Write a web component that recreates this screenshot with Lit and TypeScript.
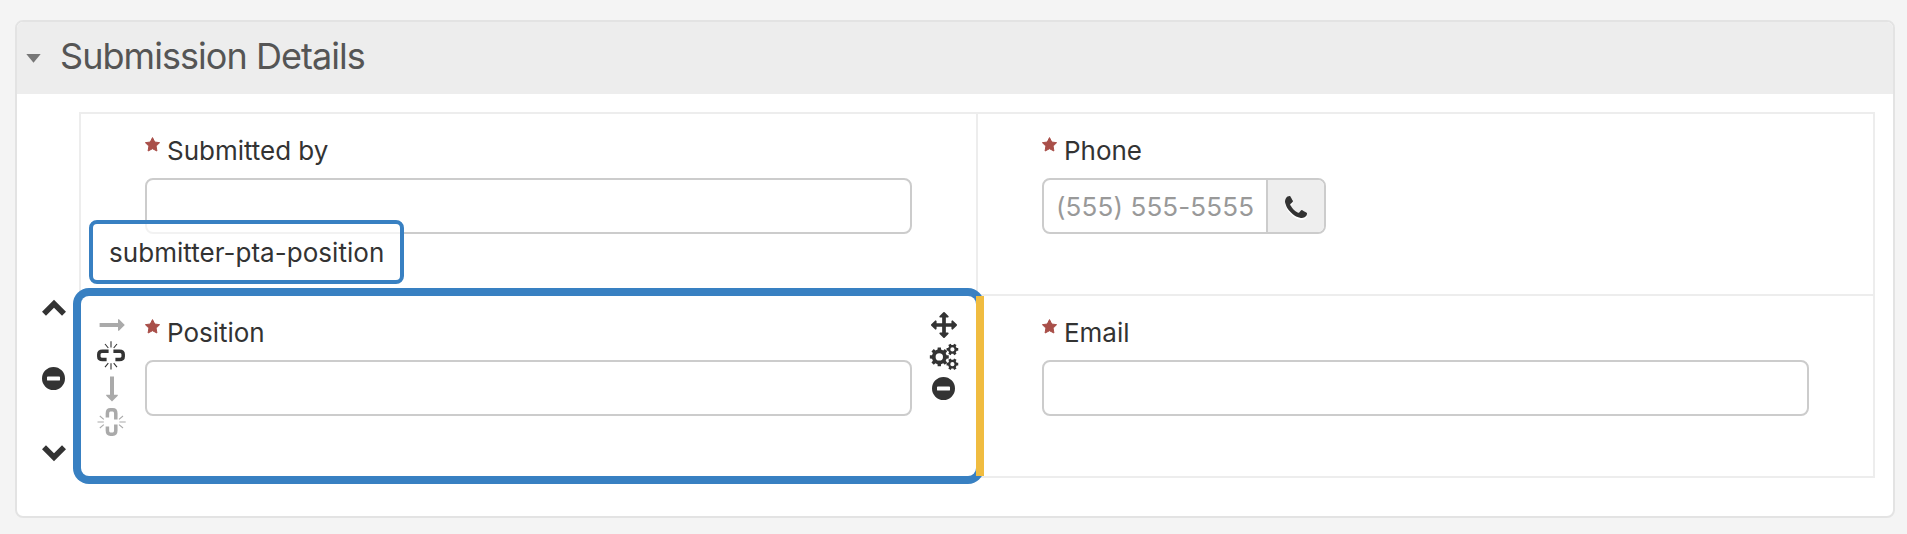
import { LitElement, html, svg, css } from "lit";
import { customElement, property } from "lit/decorators.js";
import { classMap } from "lit/directives/class-map.js";

/** Outline of a cog wheel with a round hole, for fill-rule evenodd. */
function gear(cx: number, cy: number, outer: number, inner: number, hole: number, teeth: number, turn = 0): string {
  const step = (Math.PI * 2) / teeth;
  const points: string[] = [];
  for (let i = 0; i < teeth; i++) {
    const a = i * step + turn;
    for (const [r, o] of [[inner, -0.3], [outer, -0.22], [outer, 0.22], [inner, 0.3]]) {
      const t = a + o * step;
      points.push(`${(cx + r * Math.cos(t)).toFixed(2)} ${(cy + r * Math.sin(t)).toFixed(2)}`);
    }
  }
  return `M${points.join("L")}ZM${cx - hole} ${cy}a${hole} ${hole} 0 1 0 ${hole * 2} 0a${hole} ${hole} 0 1 0 ${-hole * 2} 0Z`;
}

const chain = svg`
  <path d="M11.600 10.200H5.500Q1.800 10.200 1.800 13.200V15.600Q1.800 18.600 5.500 18.600H9.600M16.400 10.200H22.500Q26.200 10.200 26.200 13.200V15.600Q26.200 18.600 22.500 18.600H18.400"
    fill="none" stroke="currentColor" stroke-width="3.5"/>
  <path d="M14 .3V6.600M14 22.200V28.500M8 3L11.300 7M20 3L16.700 7M8 26.200L11.300 22.200M20 26.200L16.700 22.200"
    fill="none" stroke="currentColor" stroke-width="1.1"/>`;

const ICONS: Record<string, [number, number, unknown]> = {
  up: [24, 16, svg`<path d="M2 13.700L12 3.700L22 13.700" fill="none" stroke="currentColor" stroke-width="5.600"/>`],
  down: [24, 16, svg`<path d="M2 2.300L12 12.300L22 2.300" fill="none" stroke="currentColor" stroke-width="5.600"/>`],
  minus: [23, 23, svg`<path fill-rule="evenodd" d="M11.500 0a11.500 11.500 0 1 0 0 23a11.500 11.500 0 1 0 0-23ZM5.900 9.400H17.100Q18 9.400 18 10.300V12.700Q18 13.600 17.100 13.600H5.900Q5 13.600 5 12.700V10.300Q5 9.400 5.900 9.400Z"/>`],
  right: [26, 12, svg`<path d="M.6 4H19V.2H20L25.800 6L20 11.800H19V8H.6Z"/>`],
  bottom: [12, 26, svg`<path d="M4 .4H8V18.800H11.800V19.800L6 25.600L.2 19.800V18.800H4Z"/>`],
  unlinkH: [28, 29, chain],
  unlinkV: [29, 28, svg`<g transform="translate(29 0) rotate(90)">${chain}</g>`],
  move: [26, 26, svg`<path transform="scale(.01451)" d="M1792 896q0 26-19 45l-256 256q-19 19-45 19t-45-19-19-45v-128h-384v384h128q26 0 45 19t19 45-19 45l-256 256q-19 19-45 19t-45-19l-256-256q-19-19-19-45t19-45 45-19h128v-384h-384v128q0 26-19 45t-45 19-45-19l-256-256q-19-19-19-45t19-45l256-256q19-19 45-19t45 19 19 45v128h384v-384h-128q-26 0-45-19t-19-45 19-45l256-256q19-19 45-19t45 19l256 256q19 19 19 45t-19 45-45 19h-128v384h384v-128q0-26 19-45t45-19 45 19l256 256q19 19 19 45z"/>`],
  cogs: [28, 26, svg`<path fill-rule="evenodd" d="${gear(9.300, 12.900, 9.600, 7.500, 3.700, 8)}${gear(22.400, 5.400, 6, 4.500, 2.100, 6)}${gear(22.400, 20.200, 6, 4.500, 2.100, 6)}"/>`],
  phone: [22, 22, svg`<path transform="scale(.015625) translate(-192 -128)" d="M1600 1240q0 27-10 70.5t-21 68.5q-21 50-122 106-94 51-186 51-27 0-52.5-3.5t-57.5-12.5-47.5-14.5-55.5-20.5-49-18q-98-35-175-83-128-79-264.5-215.5t-215.5-264.5q-48-77-83-175-3-9-18-49t-20.5-55.5-14.5-47.5-12.5-57.5-3.5-52.5q0-92 51-186 56-101 106-122 25-11 68.5-21t70.5-10q14 0 21 3 18 6 53 76 11 19 30 54t35 63.5 31 53.5q3 4 17.5 25t21.5 35.5 7 28.5q0 20-28.5 50t-62 55-62 53-28.5 46q0 9 5 22.5t8.5 20.5 14 24 11.5 19q76 137 174 235t235 174q2 1 19 11.5t24 14 20.5 8.5 22.5 5q18 0 46-28.5t53-62 55-62 50-28.5q14 0 28.5 7t35.5 21.5 25 17.5q25 15 53.5 31t63.5 35 54 30q70 35 76 53 3 7 3 21z"/>`],
  star: [15, 15, svg`<path d="M7.500 .6L9.700 5L14.600 5.700L11.100 9.100L11.900 14L7.500 11.700L3.100 14L3.900 9.100L.4 5.700L5.300 5Z" stroke="currentColor" stroke-width="1" stroke-linejoin="round"/>`],
  caret: [15, 9, svg`<path d="M.3 0H14.700L7.500 8.800Z"/>`],
};

@customElement("form-icon")
class FormIcon extends LitElement {
  @property() name = "";

  static styles = css`
    :host { display: block; flex: none; }
    svg { display: block; fill: currentColor; overflow: visible; }
  `;

  render() {
    const [w, h, body] = ICONS[this.name];
    return html`<svg width=${w} height=${h} viewBox="0 0 ${w} ${h}">${body}</svg>`;
  }
}

interface Field {
  label: string;
  phone?: boolean;
  selected?: boolean;
}

const FIELDS: Field[] = [
  { label: "Submitted by" },
  { label: "Phone", phone: true },
  { label: "Position", selected: true },
  { label: "Email" },
];

@customElement("app-root")
class AppRoot extends LitElement {
  static styles = css`
    :host {
      display: block;
      box-sizing: border-box;
      height: 534px;
      padding: 20px 12px 16px 15px;
      background: #f4f4f4;
      color: #333;
      font: 26px/36px Inter, "Liberation Sans", sans-serif;
    }
    * { box-sizing: border-box; }
    .panel {
      height: 498px;
      border: 2px solid #e3e3e3;
      border-radius: 8px;
      background: #fff;
      overflow: hidden;
    }
    .header {
      display: flex;
      align-items: center;
      height: 72px;
      padding-left: 9px;
      gap: 19px;
      background: #ededed;
      color: #777;
    }
    .title {
      margin: 0;
      padding-bottom: 4px;
      color: #555;
      font-size: 36px;
      line-height: 40px;
      font-weight: 400;
      letter-spacing: -0.95px;
      white-space: nowrap;
    }
    .content {
      display: grid;
      grid-template-columns: 62px 1fr;
      padding: 18px 18px 0 0;
    }
    .row-tools {
      display: flex;
      flex-direction: column;
      align-items: center;
      padding: 188px 0 0 11px;
      gap: 51px;
    }
    .row-tools .lower { margin-top: 4px; }
    .grid {
      display: grid;
      grid-template-columns: 1fr 1fr;
      grid-template-rows: 182px 182px;
      border: solid #ededed;
      border-width: 2px 0 0 2px;
    }
    .cell {
      position: relative;
      display: grid;
      grid-template-columns: 64px 1fr 64px;
      border: solid #ededed;
      border-width: 0 2px 2px 0;
    }
    .field {
      grid-column: 2;
      padding-top: 19px;
    }
    .label {
      display: flex;
      gap: 7px;
      height: 45px;
      white-space: nowrap;
      letter-spacing: -0.02px;
    }
    .star { color: #a94f49; margin-top: 4px; }
    .input {
      display: flex;
      height: 56px;
      border: 2px solid #ccc;
      border-radius: 8px;
      background: #fff;
      overflow: hidden;
    }
    .input.phone { width: 284px; }
    .placeholder {
      flex: 1;
      padding: 9px 0 0 12px;
      color: #999;
      letter-spacing: 0.13px;
      white-space: nowrap;
    }
    .addon {
      display: flex;
      align-items: center;
      justify-content: center;
      width: 58px;
      border-left: 2px solid #ccc;
      background: #eee;
    }
    .addon form-icon { filter: drop-shadow(0 2px 0 #fff); margin-top: 2px; }
    .cell-left, .cell-right {
      display: flex;
      flex-direction: column;
      align-items: center;
    }
    .cell-left { color: #aaa; padding: 23px 2px 0 0; gap: 6px; }
    .cell-left .active { color: #333; margin: 4px 2px 0 0; }
    .cell-left .last { margin-right: 2px; }
    .cell-right { padding: 16px 1px 0 0; gap: 7px; }
    .cell-right .cogs { margin-top: -1px; }
    .frame {
      position: absolute;
      inset: 0;
      border-radius: 8px;
      box-shadow: 0 0 0 8px #3880c2;
      pointer-events: none;
    }
    .selected { z-index: 1; }
    .drop-edge {
      position: absolute;
      top: 0;
      bottom: 0;
      left: 100%;
      width: 8px;
      background: #f0bc40;
    }
    .tag {
      position: absolute;
      left: 8px;
      top: -76px;
      width: 315px;
      height: 64px;
      padding-left: 16px;
      border: 4px solid #3880c2;
      border-radius: 8px;
      background: rgba(255, 255, 255, 0.75);
      line-height: 58px;
      letter-spacing: 0.04px;
      white-space: nowrap;
    }
  `;

  private cell(f: Field) {
    return html`
      <div class=${classMap({ cell: true, selected: !!f.selected })}>
        ${f.selected ? html`
          <div class="cell-left">
            <form-icon name="right"></form-icon>
            <form-icon class="active" name="unlinkH"></form-icon>
            <form-icon name="bottom"></form-icon>
            <form-icon class="last" name="unlinkV"></form-icon>
          </div>` : null}
        <div class="field">
          <div class="label"><form-icon class="star" name="star"></form-icon><span>${f.label}</span></div>
          ${f.phone
            ? html`<div class="input phone"><span class="placeholder">(555) 555-5555</span><span class="addon"><form-icon name="phone"></form-icon></span></div>`
            : html`<div class="input"></div>`}
        </div>
        ${f.selected ? html`
          <div class="cell-right">
            <form-icon name="move"></form-icon>
            <form-icon class="cogs" name="cogs"></form-icon>
            <form-icon name="minus"></form-icon>
          </div>
          <div class="frame"></div>
          <div class="drop-edge"></div>
          <div class="tag">submitter-pta-position</div>` : null}
      </div>`;
  }

  render() {
    return html`
      <section class="panel">
        <header class="header">
          <form-icon name="caret"></form-icon>
          <h2 class="title">Submission Details</h2>
        </header>
        <div class="content">
          <div class="row-tools">
            <form-icon name="up"></form-icon>
            <form-icon name="minus"></form-icon>
            <form-icon class="lower" name="down"></form-icon>
          </div>
          <div class="grid">${FIELDS.map((f) => this.cell(f))}</div>
        </div>
      </section>`;
  }
}
